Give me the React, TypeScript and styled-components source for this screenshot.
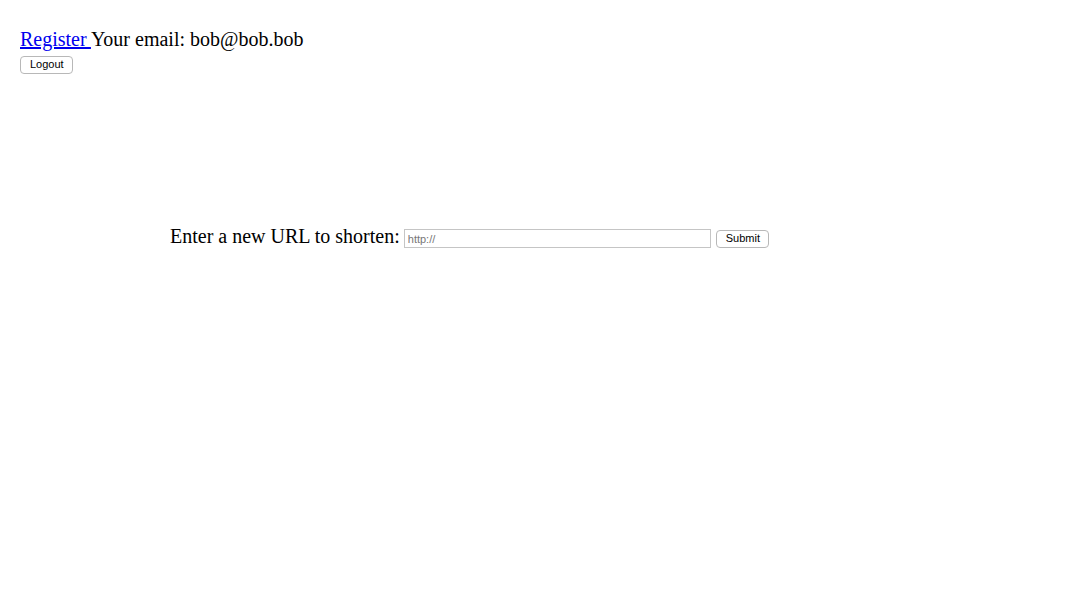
import React from "react";
import styled, { createGlobalStyle } from "styled-components";

const Global = createGlobalStyle`
  html, body { margin: 0; padding: 0; background: #fff; }
  body { font-family: "Liberation Serif", "Times New Roman", serif; color: #000; }
`;

const Page = styled.div`
  padding: 28px 20px 0 20px;
  display: flex;
  flex-direction: column;
`;

const Header = styled.div`
  font-size: 20px;
  line-height: 23px;
  white-space: pre;
`;

const Link = styled.a`
  color: #0000ee;
  text-decoration: underline;
`;

const SmallButton = styled.button`
  font-family: "Liberation Sans", Arial, sans-serif;
  font-size: 11px;
  line-height: 13px;
  color: #000;
  background: #fff;
  border: 1px solid #b8b8b8;
  border-radius: 4px;
  padding: 1px 8px 2px 9px;
  height: 18px;
  box-sizing: border-box;
`;

const HeaderButtons = styled.div`
  display: flex;
  margin-top: 5px;
`;

const Form = styled.form`
  display: flex;
  align-items: flex-end;
  margin-top: 151px;
  margin-left: 150px;
`;

const Label = styled.label`
  font-size: 20px;
  line-height: 23px;
  margin-right: 4px;
`;

const Input = styled.input`
  width: 307px;
  height: 19px;
  box-sizing: border-box;
  border: 1px solid #c5c5c5;
  padding: 1px 3px;
  font-family: "Liberation Sans", Arial, sans-serif;
  font-size: 11px;
  margin-right: 5px;
  margin-bottom: 0;
  &::placeholder { color: #777; }
`;

const SubmitButton = styled(SmallButton)`
  margin-bottom: 0;
`;

export default function App() {
  return (
    <>
      <Global />
      <Page>
        <Header>
          <Link href="#">Register </Link>Your email: bob@bob.bob
        </Header>
        <HeaderButtons>
          <SmallButton type="button">Logout</SmallButton>
        </HeaderButtons>
        <Form onSubmit={(e) => e.preventDefault()}>
          <Label>Enter a new URL to shorten:</Label>
          <Input placeholder="http://" />
          <SubmitButton type="submit">Submit</SubmitButton>
        </Form>
      </Page>
    </>
  );
}
